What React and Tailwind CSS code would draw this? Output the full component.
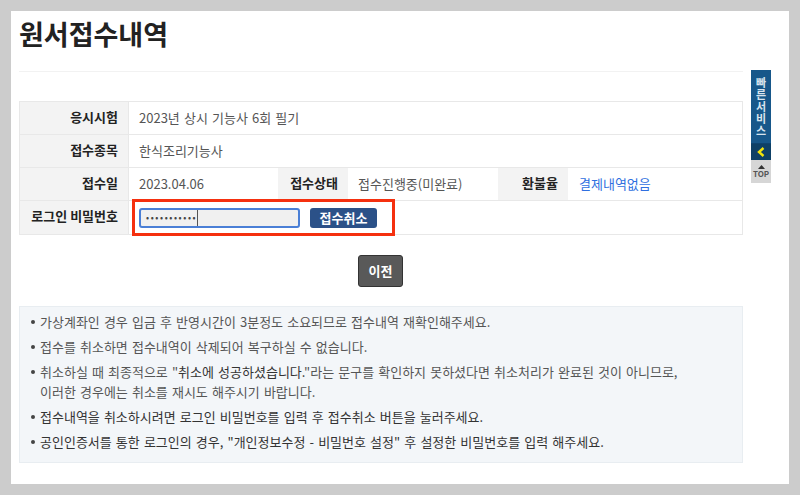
// App.jsx
// Application history page with the cancel form
import React from 'react';

const labelCls = 'flex items-center justify-end bg-[#f3f3f3] pb-[3px] pr-[10px] text-[13px] font-bold text-[#222]';
const valueCls = 'flex items-center pb-[1px] pl-[10px] text-[13px] text-[#555] [word-spacing:1.2px]';

function Row({ label, children, last }) {
  return (
    <div className={`flex h-[33px] ${last ? '' : 'border-b border-[#e8e8e8]'}`}>
      <div className={`${labelCls} w-[109px] border-r border-[#e8e8e8]`}>{label}</div>
      {children}
    </div>
  );
}

function SideMenu() {
  return (
    <div className="absolute left-[751px] top-[70px] w-[20px]">
      <div className="flex h-[73px] items-center justify-center bg-[#17578a] text-[11px] font-bold leading-[20px] tracking-[1px] text-[#d9e4ee] [writing-mode:vertical-rl]">
        빠른서비스
      </div>
      <div className="flex h-[17px] items-center justify-center border-t border-[#0f4470] bg-[#0e4066]">
        <svg width="8" height="10" viewBox="0 0 8 10">
          <path d="M6.5 1 L2 5 L6.5 9" fill="none" stroke="#f2e30c" strokeWidth="2.4" />
        </svg>
      </div>
      <div className="flex h-[23px] flex-col items-center justify-center bg-[#d6d6d6] pt-[1px]">
        <svg width="7" height="4" viewBox="0 0 7 4">
          <path d="M3.5 0 L7 4 L0 4 Z" fill="#333" />
        </svg>
        <span className="text-[8px] font-bold leading-[10px] text-[#555]">TOP</span>
      </div>
    </div>
  );
}

function Dot() {
  return <span className="mr-[5px] mt-[8px] h-[4px] w-[4px] shrink-0 rounded-full bg-[#444]" />;
}

export default function App() {
  return (
    <div className="relative h-[495px] w-[800px] overflow-hidden bg-[#cccccc] p-[11px] font-['Noto_Sans_CJK_KR','Liberation_Sans',sans-serif]">
      <div className="h-[473px] w-[778px] bg-white pl-[8px] pr-[46px]">
        <div className="flex h-[61px] items-start border-b border-[#f2f2f2] pt-[5px]">
          <h1 className="text-[27px] font-bold leading-[36px] text-[#222]">원서접수내역</h1>
        </div>

        <div className="mt-[29px] border border-[#e8e8e8]">
          <Row label="응시시험">
            <div className={valueCls}>2023년 상시 기능사 6회 필기</div>
          </Row>
          <Row label="접수종목">
            <div className={valueCls}>한식조리기능사</div>
          </Row>
          <Row label="접수일">
            <div className={`${valueCls} w-[149px]`}>2023.04.06</div>
            <div className={`${labelCls} w-[70px]`}>접수상태</div>
            <div className={`${valueCls} w-[150px]`}>접수진행중(미완료)</div>
            <div className={`${labelCls} w-[70px]`}>환불율</div>
            <div className="flex items-center pb-[1px] pl-[11px] text-[13px] text-[#2f6fe0]">결제내역없음</div>
          </Row>
          <Row label="로그인 비밀번호" last>
            <div className="flex items-center gap-[10px] pl-[10px]">
              <div className="flex h-[20px] w-[161px] items-center rounded-[3px] border-2 border-[#4a7fd6] bg-[#f0f0f0] pl-[5px]">
                <span className="border-r border-[#555] text-[9px] leading-[16px] tracking-[1.6px] text-[#444]">•••••••••••</span>
              </div>
              <button className="h-[20px] w-[67px] rounded-[3px] bg-[#2b5188] text-[13px] font-bold leading-none text-white">접수취소</button>
            </div>
          </Row>
        </div>

        <div className="mt-[20px] flex justify-center pr-[1px]">
          <button className="h-[32px] w-[45px] rounded-[3px] border border-[#333] bg-[#595959] text-[13px] font-bold text-white">이전</button>
        </div>

        <ul className="mt-[19px] h-[157px] border border-[#e8edf1] bg-[#f3f6f9] pl-[11px] pt-[5px] text-[13px] leading-[20px] text-[#555] [word-spacing:1.2px]">
          <li className="mb-[5px] flex"><Dot />가상계좌인 경우 입금 후 반영시간이 3분정도 소요되므로 접수내역 재확인해주세요.</li>
          <li className="mb-[5px] flex"><Dot />접수를 취소하면 접수내역이 삭제되어 복구하실 수 없습니다.</li>
          <li className="mb-[5px] flex">
            <Dot />
            <span>
              취소하실 때 최종적으로 "<span className="text-[#333]">취소에 성공하셨습니다.</span>"라는 문구를 확인하지 못하셨다면 취소처리가 완료된 것이 아니므로,
              <br />
              이러한 경우에는 취소를 재시도 해주시기 바랍니다.
            </span>
          </li>
          <li className="mb-[5px] flex text-[#333]"><Dot />접수내역을 취소하시려면 로그인 비밀번호를 입력 후 접수취소 버튼을 눌러주세요.</li>
          <li className="flex text-[#333]"><Dot />공인인증서를 통한 로그인의 경우, "개인정보수정 - 비밀번호 설정" 후 설정한 비밀번호를 입력 해주세요.</li>
        </ul>
      </div>

      <SideMenu />

      {/* red highlight drawn over the password row */}
      <div className="absolute left-[132px] top-[199px] h-[37px] w-[263px] border-[3px] border-[#f5300f]" />
    </div>
  );
}
